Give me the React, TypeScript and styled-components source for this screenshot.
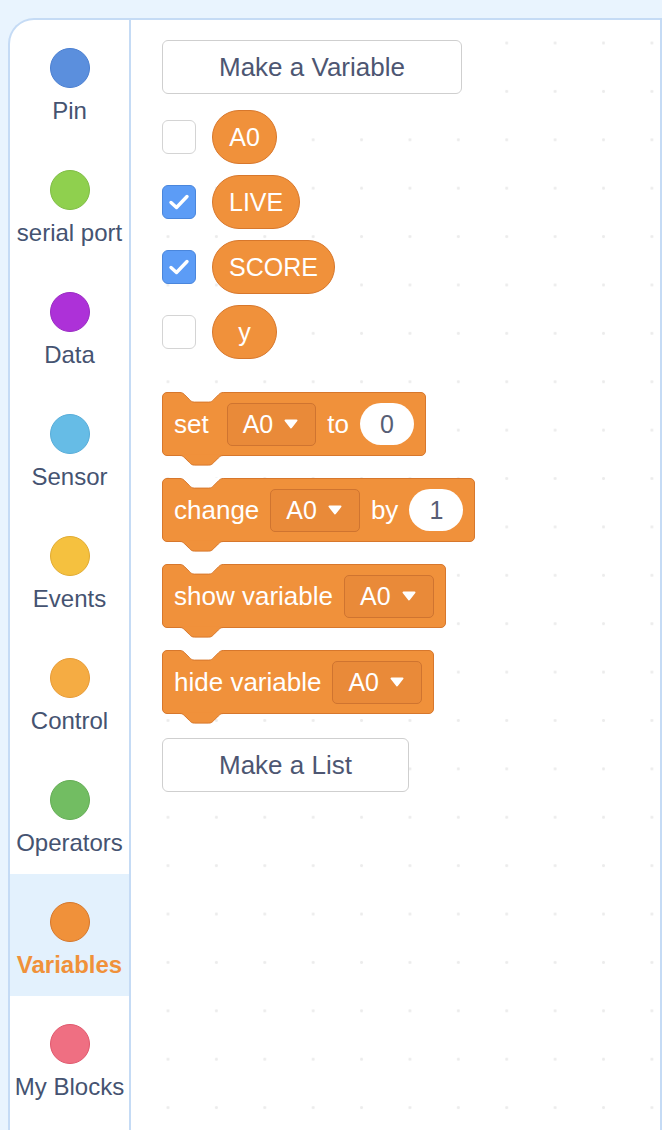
import React from 'react';
import styled, { createGlobalStyle } from 'styled-components';

const GlobalStyle = createGlobalStyle`
  html, body {
    margin: 0;
    padding: 0;
    background: #e9f4fe;
    font-family: "Liberation Sans", Arial, sans-serif;
  }
`;

const Page = styled.div`
  padding: 18px 0 0 8px;
  height: 1130px;
  box-sizing: border-box;
  overflow: hidden;
`;

const Panel = styled.div`
  display: flex;
  height: 1112px;
  background: #fff;
  border: 2px solid #c5dbf5;
  border-bottom: none;
  border-top-left-radius: 26px;
  overflow: hidden;
`;

const Sidebar = styled.div`
  width: 119px;
  flex-shrink: 0;
  border-right: 2px solid #c5dbf5;
  display: flex;
  flex-direction: column;
`;

const Category = styled.div<{ $active?: boolean }>`
  height: 122px;
  display: flex;
  flex-direction: column;
  align-items: center;
  padding-top: 28px;
  box-sizing: border-box;
  background: ${(p) => (p.$active ? '#e3f1fd' : 'transparent')};
`;

const Dot = styled.div<{ $fill: string; $edge: string }>`
  width: 40px;
  height: 40px;
  border-radius: 50%;
  box-sizing: border-box;
  background: ${(p) => p.$fill};
  border: 1.5px solid ${(p) => p.$edge};
`;

const CategoryLabel = styled.div<{ $active?: boolean }>`
  margin-top: 11px;
  font-size: 24px;
  line-height: 24px;
  white-space: nowrap;
  color: ${(p) => (p.$active ? '#f0913a' : '#455371')};
  font-weight: ${(p) => (p.$active ? 700 : 400)};
`;

const Workspace = styled.div`
  flex: 1;
  padding: 20px 0 0 31px;
  display: flex;
  flex-direction: column;
  align-items: flex-start;
  background-color: #fff;
  background-image: radial-gradient(circle, #ececec 1.2px, transparent 1.7px);
  background-size: 48.4px 48.4px;
  background-position: 12.8px -1.2px;
`;

const FlyoutButton = styled.div<{ $top?: number }>`
  height: 54px;
  padding: 0 56px;
  margin-top: ${(p) => p.$top ?? 0}px;
  box-sizing: border-box;
  display: flex;
  align-items: center;
  justify-content: center;
  background: #fff;
  border: 1.5px solid #cfcfcf;
  border-radius: 6px;
  font-size: 26px;
  color: #4d5672;
  white-space: nowrap;
`;

const VarList = styled.div`
  display: flex;
  flex-direction: column;
  gap: 11px;
  margin-top: 16px;
`;

const VarRow = styled.div`
  display: flex;
  align-items: center;
  gap: 16px;
`;

const Check = styled.div<{ $checked?: boolean }>`
  width: 34px;
  height: 34px;
  box-sizing: border-box;
  border-radius: 6px;
  display: flex;
  align-items: center;
  justify-content: center;
  background: ${(p) => (p.$checked ? '#5c9cf6' : '#fff')};
  border: 1.5px solid ${(p) => (p.$checked ? '#4a86dc' : '#d4d4d4')};
`;

const Reporter = styled.div`
  height: 54px;
  min-width: 65px;
  padding: 0 16px;
  box-sizing: border-box;
  display: flex;
  align-items: center;
  justify-content: center;
  background: #f0913b;
  border: 1px solid #d7772c;
  border-radius: 27px;
  color: #fff;
  font-size: 25px;
`;

const BlockStack = styled.div`
  display: flex;
  flex-direction: column;
  align-items: flex-start;
  gap: 22px;
  margin-top: 33px;
`;

const Block = styled.div`
  position: relative;
  height: 64px;
  padding: 0 11px;
  box-sizing: border-box;
  display: flex;
  align-items: center;
  gap: 11px;
  background: #f0913b;
  border: 1px solid #d7772c;
  border-radius: 5px;
`;

const BlockText = styled.span<{ $extra?: number }>`
  color: #fff;
  font-size: 26px;
  white-space: nowrap;
  margin-right: ${(p) => p.$extra ?? 0}px;
`;

const Dropdown = styled.div`
  height: 43px;
  padding: 0 17px 0 15px;
  box-sizing: border-box;
  display: flex;
  align-items: center;
  gap: 11px;
  background: #e98a39;
  border: 1px solid #cf7430;
  border-radius: 5px;
  color: #fff;
  font-size: 25px;
`;

const NumberInput = styled.div`
  width: 54px;
  height: 42px;
  border-radius: 21px;
  background: #fff;
  display: flex;
  align-items: center;
  justify-content: center;
  color: #575e75;
  font-size: 25px;
`;

const NotchSvg = styled.svg`
  position: absolute;
  left: 17px;
  top: -1px;
  overflow: visible;
`;

const TabSvg = styled.svg`
  position: absolute;
  left: 17px;
  bottom: -12px;
  overflow: visible;
`;

const notchCurve =
  'c 2.4,0 3.6,1.2 4.8,2.4 l 4.8,4.8 c 1.2,1.2 2.4,2.4 4.8,2.4 h 14.4 c 2.4,0 3.6,-1.2 4.8,-2.4 l 4.8,-4.8 c 1.2,-1.2 2.4,-2.4 4.8,-2.4';

const TopNotch = () => (
  <NotchSvg width="44" height="12" viewBox="0 0 44 12">
    <path d={`M0,0.5 ${notchCurve} L43.2,-0.5 L0,-0.5 Z`} fill="#fff" />
    <path d={`M0,0.5 ${notchCurve}`} fill="none" stroke="#d7772c" strokeWidth="1" />
  </NotchSvg>
);

const BottomTab = () => (
  <TabSvg width="44" height="12" viewBox="0 0 44 12">
    <path d={`M0,-0.2 L0,0.5 ${notchCurve} L43.2,-0.2 Z`} fill="#f0913b" />
    <path d={`M0,0.5 ${notchCurve}`} fill="none" stroke="#d7772c" strokeWidth="1" />
  </TabSvg>
);

const Caret = () => (
  <svg width="14" height="10" viewBox="0 0 14 10">
    <path d="M1.5,1.5 H12.5 L7,8.5 Z" fill="#fff" stroke="#fff" strokeWidth="2" strokeLinejoin="round" />
  </svg>
);

const Tick = () => (
  <svg width="22" height="18" viewBox="0 0 22 18">
    <polyline points="3,9.5 8.5,14.5 19,3.5" fill="none" stroke="#fff" strokeWidth="3.4" strokeLinecap="round" strokeLinejoin="round" />
  </svg>
);

const categories = [
  { name: 'Pin', fill: '#5b8fdd', edge: '#4a7fd1' },
  { name: 'serial port', fill: '#8fd04e', edge: '#7fbd44' },
  { name: 'Data', fill: '#ad31d8', edge: '#9a2bc3' },
  { name: 'Sensor', fill: '#66bce6', edge: '#58add9' },
  { name: 'Events', fill: '#f5c13f', edge: '#e1ab31' },
  { name: 'Control', fill: '#f5ac43', edge: '#e79b36' },
  { name: 'Operators', fill: '#72bd62', edge: '#64ad55' },
  { name: 'Variables', fill: '#f0913a', edge: '#d6772b', active: true },
  { name: 'My Blocks', fill: '#ef6f82', edge: '#e0586d' },
];

const variables = [
  { name: 'A0', checked: false },
  { name: 'LIVE', checked: true },
  { name: 'SCORE', checked: true },
  { name: 'y', checked: false },
];

export default function App() {
  return (
    <>
      <GlobalStyle />
      <Page>
        <Panel>
          <Sidebar>
            {categories.map((c) => (
              <Category key={c.name} $active={c.active}>
                <Dot $fill={c.fill} $edge={c.edge} />
                <CategoryLabel $active={c.active}>{c.name}</CategoryLabel>
              </Category>
            ))}
          </Sidebar>

          <Workspace>
            <FlyoutButton>Make a Variable</FlyoutButton>

            <VarList>
              {variables.map((v) => (
                <VarRow key={v.name}>
                  <Check $checked={v.checked}>{v.checked && <Tick />}</Check>
                  <Reporter>{v.name}</Reporter>
                </VarRow>
              ))}
            </VarList>

            <BlockStack>
              <Block>
                <TopNotch />
                <BlockText $extra={7}>set</BlockText>
                <Dropdown>A0<Caret /></Dropdown>
                <BlockText>to</BlockText>
                <NumberInput>0</NumberInput>
                <BottomTab />
              </Block>
              <Block>
                <TopNotch />
                <BlockText>change</BlockText>
                <Dropdown>A0<Caret /></Dropdown>
                <BlockText>by</BlockText>
                <NumberInput>1</NumberInput>
                <BottomTab />
              </Block>
              <Block>
                <TopNotch />
                <BlockText>show variable</BlockText>
                <Dropdown>A0<Caret /></Dropdown>
                <BottomTab />
              </Block>
              <Block>
                <TopNotch />
                <BlockText>hide variable</BlockText>
                <Dropdown>A0<Caret /></Dropdown>
                <BottomTab />
              </Block>
            </BlockStack>

            <FlyoutButton $top={24}>Make a List</FlyoutButton>
          </Workspace>
        </Panel>
      </Page>
    </>
  );
}
